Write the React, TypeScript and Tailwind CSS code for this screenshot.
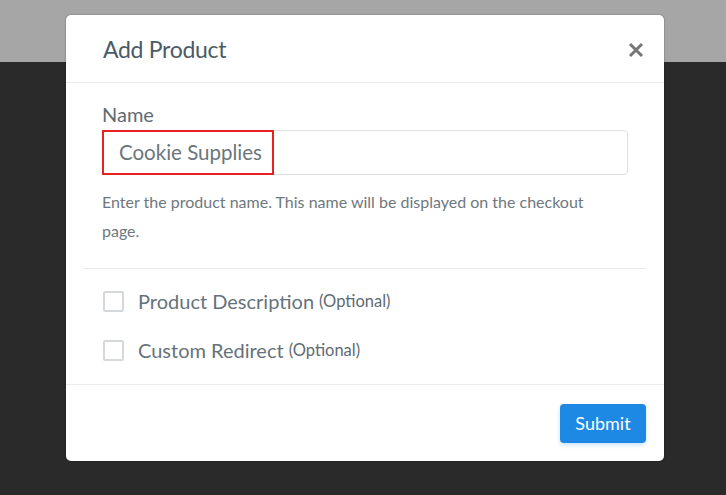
import React from "react";

export default function App() {
  const font = { fontFamily: "Lato, 'Open Sans', sans-serif" };
  return (
    <div className="relative w-[726px] h-[495px] flex flex-col overflow-hidden" style={font}>
      <div className="h-[62px] bg-[#a6a6a6]" />
      <div className="flex-1 bg-[#2a2a2a]" />
      <div className="absolute left-[66px] top-[15px] w-[598px] bg-white rounded-[5px] shadow-[0_0_2px_rgba(0,0,0,0.4)] flex flex-col">
        <div className="h-[68px] flex items-center justify-between pl-[37px] pr-[20px] border-b border-[#e9ecef]">
          <h2 className="text-[23px] text-[#4b5b66] tracking-[-0.3px] mt-[1px]">Add Product</h2>
          <svg width="16" height="16" viewBox="0 0 16 16" className="mt-[2px]">
            <path d="M2 2 L14 14 M14 2 L2 14" stroke="#777" strokeWidth="3" strokeLinecap="butt" />
          </svg>
        </div>
        <div className="px-[36px] pt-[21px] flex flex-col">
          <label className="text-[20px] leading-[20px] text-[#5f6b72]">Name</label>
          <div className="mt-[6px] h-[45px] border border-[#dcdfe2] rounded-[4px] flex items-stretch">
            <div className="w-[172px] -ml-[1px] -my-[1px] border-2 border-[#e8201f] flex items-center pl-[15px] text-[20.5px] text-[#6b767c]">
              Cookie Supplies
            </div>
          </div>
          <p className="mt-[12px] w-[500px] text-[16px] leading-[29px] text-[#6e787e]">
            Enter the product name. This name will be displayed on the checkout page.
          </p>
        </div>
        <div className="mx-[18px] mt-[23px] border-t border-[#e6e8ea]" />
        <div className="px-[37px] pt-[22px] pb-[24px] flex flex-col gap-[29px]">
          {["Product Description", "Custom Redirect"].map((t) => (
            <div key={t} className="flex items-center h-[20px]">
              <div className="w-[21px] h-[21px] border-2 border-[#d5d8db] rounded-[2px]" />
              <span className="ml-[14px] text-[20px] text-[#66727a]">{t}</span>
              <span className="ml-[5px] text-[16.5px] font-normal text-[#5f6b72]">(Optional)</span>
            </div>
          ))}
        </div>
        <div className="border-t border-[#e9ecef] pt-[19px] pb-[18px] pr-[18px] flex justify-end">
          <button className="w-[86px] h-[39px] rounded-[4px] bg-[#1e88e5] text-white text-[18px] shadow-[0_2px_4px_rgba(30,136,229,0.25)]">
            Submit
          </button>
        </div>
      </div>
    </div>
  );
}
